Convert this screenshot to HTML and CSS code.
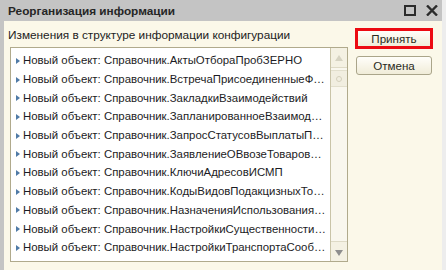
FILE: index.html
```html
<!DOCTYPE html>
<html lang="ru">
<head>
<meta charset="utf-8">
<title>Реорганизация информации</title>
<link rel="stylesheet" href="styles.css">
</head>
<body>
<div class="window">
  <div class="titlebar">
    <span class="title">Реорганизация информации</span>
    <span class="tb-btn">
      <svg width="12" height="11" viewBox="0 0 12 11"><rect x="1" y="1" width="10" height="9" fill="none" stroke="#2b2b2b" stroke-width="2"/></svg>
    </span>
    <span class="tb-btn">
      <svg width="12" height="11" viewBox="0 0 12 11"><path d="M1 0.5 L11 10.5 M11 0.5 L1 10.5" stroke="#2b2b2b" stroke-width="2.4" fill="none"/></svg>
    </span>
  </div>
  <div class="content">
    <div class="main">
      <div class="label">Изменения в структуре информации конфигурации</div>
      <div class="list">
        <div class="rows">
          <div class="row"><span class="tri"></span><span class="txt">Новый объект: Справочник.АктыОтбораПробЗЕРНО</span></div>
          <div class="row"><span class="tri"></span><span class="txt">Новый объект: Справочник.ВстречаПрисоединенныеФайлы</span></div>
          <div class="row"><span class="tri"></span><span class="txt">Новый объект: Справочник.ЗакладкиВзаимодействий</span></div>
          <div class="row"><span class="tri"></span><span class="txt">Новый объект: Справочник.ЗапланированноеВзаимодействие</span></div>
          <div class="row"><span class="tri"></span><span class="txt">Новый объект: Справочник.ЗапросСтатусовВыплатыПособий</span></div>
          <div class="row"><span class="tri"></span><span class="txt">Новый объект: Справочник.ЗаявлениеОВвозеТоваровПрисоединенныеФайлы</span></div>
          <div class="row"><span class="tri"></span><span class="txt">Новый объект: Справочник.КлючиАдресовИСМП</span></div>
          <div class="row"><span class="tri"></span><span class="txt">Новый объект: Справочник.КодыВидовПодакцизныхТоваров</span></div>
          <div class="row"><span class="tri"></span><span class="txt">Новый объект: Справочник.НазначенияИспользованияДенежныхСредств</span></div>
          <div class="row"><span class="tri"></span><span class="txt">Новый объект: Справочник.НастройкиСущественностиОтклонений</span></div>
          <div class="row"><span class="tri"></span><span class="txt">Новый объект: Справочник.НастройкиТранспортаСообщений</span></div>
        </div>
        <div class="scrollbar">
          <div class="sb-btn sb-up"><span class="arr-up"></span></div>
          <div class="sb-thumb"><span class="grip"></span></div>
          <div class="sb-track"></div>
          <div class="sb-btn sb-down"><span class="arr-down"></span></div>
        </div>
      </div>
    </div>
    <div class="side">
      <button class="btn btn-accept">Принять</button>
      <button class="btn btn-cancel">Отмена</button>
    </div>
  </div>
</div>
</body>
</html>
```

FILE: styles.css
```css
html, body {
  margin: 0;
  padding: 0;
  background: #f2f2f2;
}
.window {
  width: 446px;
  height: 270px;
  box-sizing: border-box;
  border-left: 4px solid #c4c4c4;
  border-right: 4px solid #ededed;
  display: flex;
  flex-direction: column;
  background: #fbf8e9;
  font-family: "Liberation Sans", Arial, sans-serif;
  overflow: hidden;
}
.titlebar {
  height: 21px;
  flex: none;
  background: #c4c4c4;
  display: flex;
  align-items: center;
  padding-left: 4px;
  padding-right: 4px;
}
.title {
  font-weight: bold;
  font-size: 11.8px;
  color: #262626;
  flex: 1;
}
.tb-btn {
  display: flex;
  width: 12px;
  height: 11px;
  margin-left: 10px;
}
.tb-btn:first-of-type { margin-left: 0; }
.content {
  flex: 1;
  display: flex;
  padding: 7px 0 0 4px;
}
.main {
  display: flex;
  flex-direction: column;
}
.label {
  font-size: 11.8px;
  line-height: 14px;
  height: 14px;
  color: #222;
  margin-bottom: 5px;
}
.list {
  margin-left: 2px;
  width: 338px;
  height: 215px;
  box-sizing: border-box;
  border: 1px solid #b0aa8c;
  background: #fff;
  display: flex;
}
.rows {
  flex: 1;
  min-width: 0;
  padding-top: 3px;
}
.row {
  height: 18.7px;
  display: flex;
  align-items: center;
  padding-left: 5px;
  font-size: 11.4px;
  color: #1c1c24;
}
.tri {
  flex: none;
  width: 0;
  height: 0;
  border-top: 3px solid transparent;
  border-bottom: 3px solid transparent;
  border-left: 4px solid #4f7aa6;
  margin-right: 3px;
  margin-top: 1px;
}
.txt {
  white-space: nowrap;
  overflow: hidden;
  text-overflow: ellipsis;
  padding-right: 4px;
}
.scrollbar {
  flex: none;
  width: 16px;
  border-left: 1px solid #c9c4a8;
  background: #f9f7ee;
  display: flex;
  flex-direction: column;
}
.sb-btn {
  height: 20px;
  flex: none;
  display: flex;
  align-items: center;
  justify-content: center;
  background: #f4f1e3;
  border-bottom: 1px solid #dedac6;
  box-sizing: border-box;
}
.sb-down {
  border-bottom: none;
  border-top: 1px solid #dedac6;
}
.arr-up {
  width: 0; height: 0;
  border-left: 4px solid transparent;
  border-right: 4px solid transparent;
  border-bottom: 6px solid #d6d3c2;
}
.arr-down {
  width: 0; height: 0;
  border-left: 4px solid transparent;
  border-right: 4px solid transparent;
  border-top: 6px solid #8e8e8e;
  margin-top: 2px;
}
.sb-thumb {
  height: 15px;
  margin-top: 2px;
  flex: none;
  background: #f1eee0;
  border-top: 1px solid #e2dfcd;
  border-bottom: 1px solid #e2dfcd;
  display: flex;
  align-items: center;
  justify-content: center;
}
.grip {
  width: 4px;
  height: 4px;
  border-radius: 50%;
  border: 1px solid #d4d0bc;
}
.sb-track { flex: 1; }
.side {
  margin-left: 7px;
  display: flex;
  flex-direction: column;
}
.btn {
  font-family: "Liberation Sans", Arial, sans-serif;
  font-size: 11.6px;
  color: #2a2a22;
  background: linear-gradient(#fffefa, #f0ecd8);
  border: 1px solid #aaa58a;
  border-radius: 3px;
  padding: 0;
  box-sizing: border-box;
}
.btn-accept {
  width: 78px;
  height: 21px;
  border: 3px solid #ec0a12;
  border-radius: 0;
}
.btn-cancel {
  width: 76px;
  height: 19px;
  margin-left: 1px;
  margin-top: 7px;
}
```
